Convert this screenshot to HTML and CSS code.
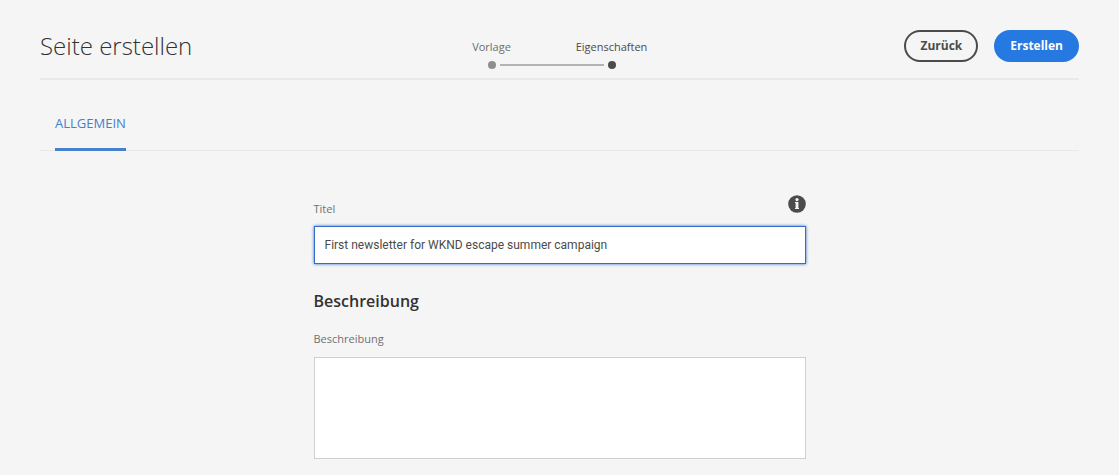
FILE: index.html
```html
<!DOCTYPE html>
<html lang="de">
<head>
<meta charset="utf-8">
<meta name="viewport" content="width=device-width, initial-scale=1">
<title>Seite erstellen</title>
<link rel="stylesheet" href="styles.css">
</head>
<body>
<div class="wizard">
  <header class="header">
    <h1 class="title">Seite erstellen</h1>
    <ol class="steps">
      <li class="step"><span>Vorlage</span><span class="dot"></span></li>
      <li class="step step-current" aria-current="step"><span>Eigenschaften</span><span class="dot"></span></li>
    </ol>
    <div class="actions">
      <button class="button" type="button">Zurück</button>
      <button class="button button-primary" type="submit" form="properties">Erstellen</button>
    </div>
  </header>
  <nav class="tabs">
    <a class="tab" href="#properties">ALLGEMEIN</a>
  </nav>
  <form class="form" id="properties">
    <div class="label-row">
      <label class="label" for="page-title">Titel</label>
      <button class="info" type="button" aria-label="Info">
        <svg width="18" height="18" viewBox="0 0 18 18" aria-hidden="true">
          <circle cx="9" cy="9" r="8.8" fill="#4b4b4b"/>
          <circle cx="9" cy="4.6" r="1.6" fill="#f5f5f5"/>
          <path d="M7 7h3.4v6h.6v1H7v-1h.6V8H7z" fill="#f5f5f5"/>
        </svg>
      </button>
    </div>
    <input class="field field-active" id="page-title" type="text" value="First newsletter for WKND escape summer campaign">
    <h2 class="section">Beschreibung</h2>
    <label class="label" for="description">Beschreibung</label>
    <textarea class="field area" id="description"></textarea>
  </form>
</div>
</body>
</html>
```
FILE: styles.css
```css
* {
  box-sizing: border-box;
}

body {
  margin: 0;
  background: #f5f5f5;
  color: #4b4b4b;
  font-family: Roboto, "Open Sans", sans-serif;
  font-size: 12px;
}

.wizard {
  padding: 14px 40px 16px;
}

.header {
  display: grid;
  grid-template-columns: 1fr auto 1fr;
  align-items: center;
  height: 66px;
  border-bottom: 2px solid #e9e9e9;
}

.title {
  margin: 0;
  color: #323232;
  font-family: "Open Sans", sans-serif;
  font-size: 24px;
  font-weight: 300;
  line-height: 32px;
}

.steps {
  display: flex;
  margin: 16px 16px 0 0;
  padding: 0;
  list-style: none;
  font-family: "Open Sans", sans-serif;
  font-size: 11px;
  line-height: 16px;
}

.step {
  position: relative;
  display: flex;
  flex-direction: column;
  align-items: center;
  gap: 6px;
  width: 120px;
  color: #6e6e6e;
}

.step-current {
  color: #4b4b4b;
}

.step-current::before {
  position: absolute;
  right: calc(50% + 8px);
  bottom: 3px;
  width: calc(100% - 16px);
  height: 2px;
  background: #b3b3b3;
  content: "";
}

.dot {
  width: 8px;
  height: 8px;
  border-radius: 50%;
  background: #8e8e8e;
}

.step-current .dot {
  background: #4b4b4b;
}

.actions {
  display: flex;
  justify-content: flex-end;
  gap: 16px;
}

.button {
  height: 32px;
  padding: 0 14px;
  border: 2px solid #4b4b4b;
  border-radius: 16px;
  background: transparent;
  color: #4b4b4b;
  font: 700 12px/16px "Open Sans", sans-serif;
}

.button-primary {
  border-color: #2679e1;
  background: #2679e1;
  color: #fff;
}

.tabs {
  display: flex;
  height: 71px;
  padding: 0 15px;
  border-bottom: 1px solid #e9e9e9;
}

.tab {
  display: flex;
  align-items: center;
  margin-top: 18px;
  margin-bottom: -1px;
  border-bottom: 3px solid #4480cb;
  color: #4480cb;
  font-family: "Open Sans", sans-serif;
  font-size: 13px;
  text-decoration: none;
}

.form {
  display: flex;
  flex-direction: column;
  width: 100%;
  max-width: 492px;
  margin: 44px auto 0;
}

.label-row {
  display: flex;
  justify-content: space-between;
  height: 31px;
}

.label {
  color: #707070;
  font-family: "Open Sans", sans-serif;
  font-size: 11px;
  line-height: 16px;
}

.label-row .label {
  margin-top: 6px;
}

.info {
  width: 18px;
  height: 18px;
  padding: 0;
  border: 0;
  background: none;
}

.info svg {
  display: block;
}

.field {
  width: 100%;
  height: 38px;
  padding: 0 10px;
  border: 1px solid #d0d0d0;
  border-radius: 0;
  outline: none;
  background: #fff;
  color: #4b4b4b;
  font: 12px/16px Roboto, sans-serif;
}

.field-active {
  border-color: #326ec8;
  box-shadow: 0 0 3px #326ec8;
}

.section {
  margin: 25px 0 18px;
  color: #323232;
  font-family: "Open Sans", sans-serif;
  font-size: 16px;
  font-weight: 600;
  line-height: 24px;
}

.area {
  height: 102px;
  margin-top: 10px;
  padding: 10px;
  resize: none;
}
```
